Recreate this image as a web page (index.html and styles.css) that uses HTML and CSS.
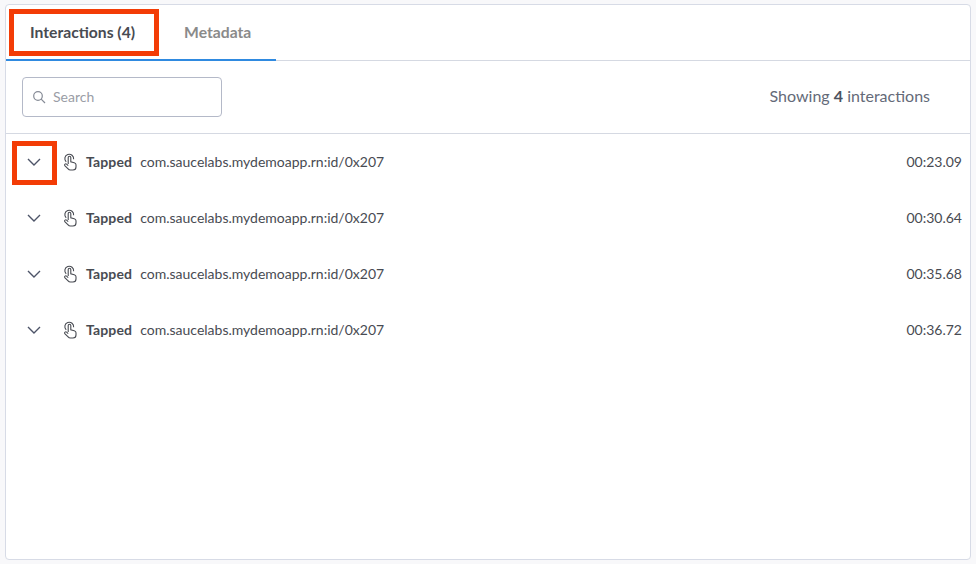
FILE: index.html
```html
<!DOCTYPE html>
<html lang="en">
<head>
<meta charset="utf-8">
<title>Interactions</title>
<link rel="stylesheet" href="styles.css">
</head>
<body>
<main class="panel">
  <nav class="tabs">
    <div class="tab-group">
      <div class="tab tab-active">Interactions (4)</div>
      <div class="tab">Metadata</div>
    </div>
    <span class="mark mark-tab"></span>
  </nav>
  <div class="toolbar">
    <label class="search">
      <svg class="search-icon" viewBox="0 0 14 14" width="14" height="14"><circle cx="6" cy="6" r="4.3"/><path d="M9.2 9.2 13 13"/></svg>
      <span>Search</span>
    </label>
    <div class="count">Showing <b>4</b> interactions</div>
  </div>
  <div class="list">
    <span class="mark mark-row"></span>
    <div class="row">
      <svg class="chev" viewBox="0 0 14 8" width="14" height="8"><path d="M1 1l6 6 6-6"/></svg>
      <svg class="tap" viewBox="0 0 14 18" width="14" height="18"><path d="M3.2 8.800A4.400 4.400 0 1 1 10.600 6.200M5.200 11V4.600a1.300 1.300 0 0 1 2.600 0v4.200l3.400.9c1 .3 1.800 1 1.800 2.100v2.200c0 1.700-1.200 3-3 3H7.400c-1 0-1.700-.4-2.300-1.200L1.800 12.600c-.8-1.200.8-2.400 1.800-1.400L5.200 12.600"/></svg>
      <b class="verb">Tapped</b>
      <span class="target">com.saucelabs.mydemoapp.rn:id/0x207</span>
      <span class="time">00:23.09</span>
    </div>
    <div class="row">
      <svg class="chev" viewBox="0 0 14 8" width="14" height="8"><path d="M1 1l6 6 6-6"/></svg>
      <svg class="tap" viewBox="0 0 14 18" width="14" height="18"><path d="M3.2 8.800A4.400 4.400 0 1 1 10.600 6.200M5.200 11V4.600a1.300 1.300 0 0 1 2.600 0v4.200l3.400.9c1 .3 1.800 1 1.800 2.100v2.200c0 1.700-1.200 3-3 3H7.400c-1 0-1.700-.4-2.300-1.200L1.800 12.600c-.8-1.200.8-2.400 1.800-1.400L5.200 12.600"/></svg>
      <b class="verb">Tapped</b>
      <span class="target">com.saucelabs.mydemoapp.rn:id/0x207</span>
      <span class="time">00:30.64</span>
    </div>
    <div class="row">
      <svg class="chev" viewBox="0 0 14 8" width="14" height="8"><path d="M1 1l6 6 6-6"/></svg>
      <svg class="tap" viewBox="0 0 14 18" width="14" height="18"><path d="M3.2 8.800A4.400 4.400 0 1 1 10.600 6.200M5.200 11V4.600a1.300 1.300 0 0 1 2.600 0v4.200l3.400.9c1 .3 1.800 1 1.800 2.100v2.200c0 1.700-1.200 3-3 3H7.400c-1 0-1.700-.4-2.300-1.200L1.800 12.600c-.8-1.200.8-2.400 1.800-1.400L5.200 12.600"/></svg>
      <b class="verb">Tapped</b>
      <span class="target">com.saucelabs.mydemoapp.rn:id/0x207</span>
      <span class="time">00:35.68</span>
    </div>
    <div class="row">
      <svg class="chev" viewBox="0 0 14 8" width="14" height="8"><path d="M1 1l6 6 6-6"/></svg>
      <svg class="tap" viewBox="0 0 14 18" width="14" height="18"><path d="M3.2 8.800A4.400 4.400 0 1 1 10.600 6.200M5.200 11V4.600a1.300 1.300 0 0 1 2.600 0v4.200l3.400.9c1 .3 1.800 1 1.800 2.100v2.200c0 1.700-1.200 3-3 3H7.400c-1 0-1.700-.4-2.300-1.200L1.800 12.600c-.8-1.200.8-2.400 1.800-1.400L5.200 12.600"/></svg>
      <b class="verb">Tapped</b>
      <span class="target">com.saucelabs.mydemoapp.rn:id/0x207</span>
      <span class="time">00:36.72</span>
    </div>
  </div>
</main>
</body>
</html>
```
FILE: styles.css
```css
* { box-sizing: border-box; }
html, body { height: 100%; }
body {
  margin: 0;
  padding: 4px 5px;
  background: #f8f8fa;
  font-family: "Lato", "Open Sans", sans-serif;
  overflow: hidden;
}
.panel {
  width: 966px;
  height: 556px;
  background: #fff;
  border: 1px solid #d7dbe6;
  border-radius: 4px;
}
.tabs {
  position: relative;
  height: 56px;
  border-bottom: 1px solid #d5d9e2;
}
.tab-group {
  display: flex;
  gap: 49px;
  width: 270px;
  height: 56px;
  padding-left: 24px;
  border-bottom: 2px solid #2f8ae0;
}
.tab {
  display: flex;
  align-items: center;
  font-size: 15.7px;
  font-weight: 700;
  color: #8a8a8a;
}
.tab-active { color: #484b52; }
.mark {
  position: absolute;
  border: 5px solid #f33c06;
}
.mark-tab { left: 3px; top: 4px; width: 150px; height: 47px; }
.mark-row { left: 6px; top: 7px; width: 45px; height: 44px; }
.toolbar {
  display: flex;
  align-items: center;
  justify-content: space-between;
  height: 73px;
  padding: 0 40px 0 16px;
  border-bottom: 1px solid #d5d9e2;
}
.search {
  display: flex;
  align-items: center;
  gap: 7px;
  width: 200px;
  height: 40px;
  padding-left: 9px;
  border: 1px solid #b4b9c8;
  border-radius: 4px;
  font-size: 14px;
  color: #9a9da6;
}
.search span { margin-bottom: 2px; }
.count { font-size: 16px; color: #646a78; margin-bottom: 3px; }
.count b { color: #4c5260; }
.search-icon { fill: none; stroke: #868b96; stroke-width: 1.2; }
.list { position: relative; }
.row {
  display: flex;
  align-items: center;
  height: 56px;
  padding: 0 8px 0 21px;
  font-size: 14px;
  color: #484b52;
}
.chev { fill: none; stroke: #4d5468; stroke-width: 1.4; flex: none; }
.tap { fill: none; stroke: #484b52; stroke-width: 1.1; flex: none; margin-left: 22px; }
.verb { margin: 0 0 2px 9px; font-weight: 700; letter-spacing: 0.15px; }
.target { margin: 0 0 2px 8px; }
.time { margin: 0 0 2px auto; }
```
